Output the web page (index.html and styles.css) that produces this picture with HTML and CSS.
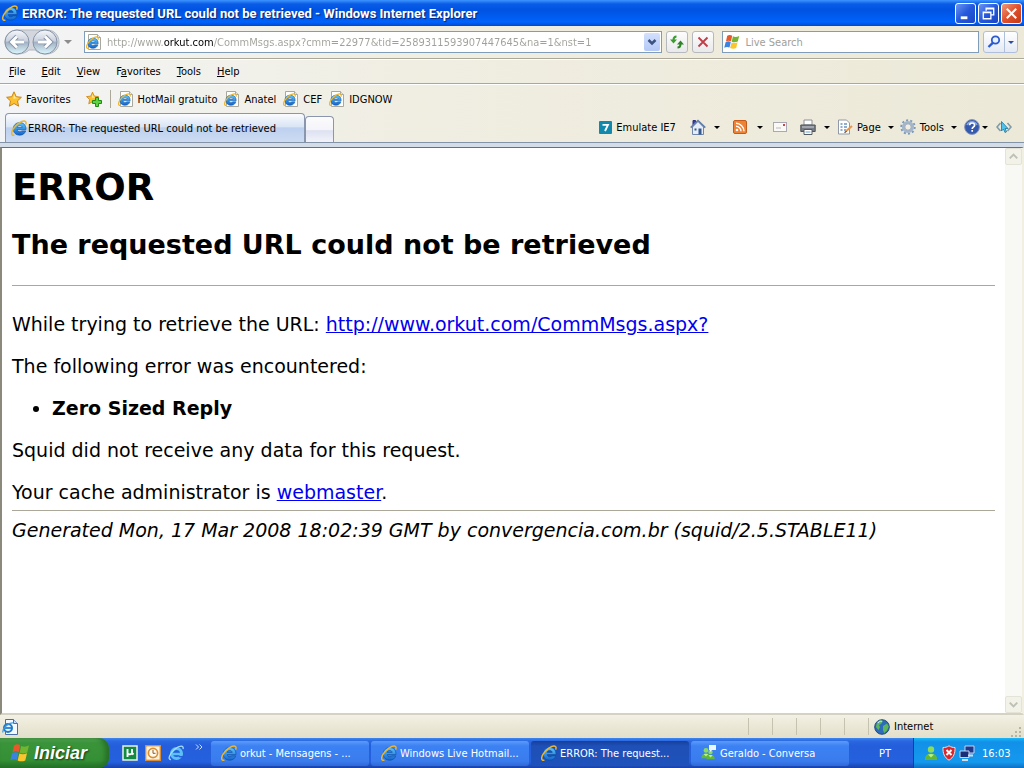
FILE: index.html
```html
<!DOCTYPE html>
<html lang="en">
<head>
<meta charset="utf-8">
<title>ERROR: The requested URL could not be retrieved</title>
<link rel="stylesheet" href="styles.css">
</head>
<body>
<svg class="defs" aria-hidden="true">
  <defs>
    <linearGradient id="ieBlue" x1="0" y1="0" x2="0" y2="1"><stop offset="0" stop-color="#5cc4fa"/><stop offset="1" stop-color="#1264cc"/></linearGradient>
    <linearGradient id="navBall" x1="0" y1="0" x2="0" y2="1"><stop offset="0" stop-color="#f7f8fb"/><stop offset=".45" stop-color="#c9d1de"/><stop offset=".52" stop-color="#a3b2c4"/><stop offset="1" stop-color="#dcf8fd"/></linearGradient>
    <symbol id="ie" viewBox="0 0 16 16">
      <path d="M15 9.600H6.200C6.400 11 7.300 11.800 8.800 11.800c.9 0 1.600-.3 2.100-.9h3.800C13.800 13.600 11.700 15.200 8.700 15.200 4.900 15.200 2.300 12.700 2.300 9 2.300 5.200 5 2.600 8.700 2.600c4 0 6.500 2.700 6.300 7zM6.200 7.400h5C11 6.200 10.100 5.600 8.700 5.600S6.400 6.200 6.200 7.400z" fill="url(#ieBlue)" stroke="#0b4c9c" stroke-width=".6"/>
      <path d="M3.400 15.200C0 16 .1 12.600 2.100 9.200 4.800 4.400 11 .2 14 1.200c1.300.4 1.300 2 .6 3.400" fill="none" stroke="#eeb62c" stroke-width="1.500"/>
    </symbol>
    <symbol id="iepage" viewBox="0 0 16 16">
      <path d="M2.500.5h9l3 3v12h-12z" fill="#fdfdfb" stroke="#a8a89e"/><path d="M11.500.5v3h3" fill="#e6e6e0" stroke="#a8a89e"/>
      <svg x="0" y="2" width="13" height="13"><use href="#ie"/></svg>
    </symbol>
    <symbol id="flag" viewBox="0 0 16 16">
      <path d="M3.200 1.800C5 .8 6.700.9 8.200 1.800L7 7.300C5.400 6.400 3.800 6.400 2 7.300z" fill="#e8582a"/>
      <path d="M8.900 2.300c1.900.9 3.900.8 6.300-.3L13.800 7.500c-2 1-4.100 1.100-6.100.2z" fill="#73b52e"/>
      <path d="M1.700 8c1.800-.9 3.500-.9 5.100 0L5.500 13.600C3.900 12.700 2.300 12.700.2 13.700z" fill="#3b83e0"/>
      <path d="M7.500 8.400c1.900.9 3.900.9 6.100-.2L12.200 13.900c-2 1-4.100 1-6.100 0z" fill="#fbc62d"/>
    </symbol>
    <symbol id="star" viewBox="0 0 16 16"><path d="M8 .8l2.200 4.900 5.200.6-3.900 3.600 1.100 5.300L8 12.500l-4.600 2.700 1.100-5.300L.6 6.300l5.200-.6z" fill="#fdc02f" stroke="#c98516"/><path d="M8 3l1.400 3.600 3.200.5-5.300.6z" fill="#ffed9c"/></symbol>
    <symbol id="buddy" viewBox="0 0 16 16"><circle cx="8" cy="4.500" r="3.200" fill="#8bdc57"/><path d="M2 15c-.5-4 2-6.500 6-6.500s6.500 2.500 6 6.500z" fill="#60b836"/><path d="M5 9.500c2-.8 4-.8 6 0l-3 3z" fill="#b8f08c"/></symbol>
  </defs>
</svg>

<div class="window">
  <header class="titlebar">
    <svg class="i16"><use href="#ie"/></svg>
    <span class="title">ERROR: The requested URL could not be retrieved - Windows Internet Explorer</span>
    <div class="caption">
      <button class="cap" aria-label="Minimize"><svg viewBox="0 0 20 20"><path d="M5 14.500h7" stroke="#fff" stroke-width="3"/></svg></button>
      <button class="cap" aria-label="Restore"><svg viewBox="0 0 20 20"><path d="M7.500 7V4.500h8v7H13M7 5h9M4.500 8.500h8v7h-8zM4 9h9" fill="none" stroke="#fff" stroke-width="1.400"/></svg></button>
      <button class="cap close" aria-label="Close"><svg viewBox="0 0 20 20"><path d="M5 5l10 10M15 5L5 15" stroke="#fff" stroke-width="2.200"/></svg></button>
    </div>
  </header>

  <div class="addressbar">
    <div class="nav">
      <svg class="navplate" viewBox="0 0 56 28"><path d="M13 2h30c7 0 12 5 12 12S50 26 42 26c-6 0-9-2-11-4h-6c-2 2-6 4-12 4C6 26 1 21 1 14S6 2 13 2z" fill="#d3d6dc" stroke="#b4b9c2"/><circle cx="13" cy="14" r="12" fill="url(#navBall)" stroke="#8594a8"/><circle cx="41" cy="14" r="12" fill="url(#navBall)" stroke="#8594a8"/><path d="M20 14H8M13 8.500L7.500 14l5.500 5.500M34 14h12M41 8.500l5.500 5.500-5.500 5.500" fill="none" stroke="#8393a8" stroke-width="4.600"/><path d="M20 14H8M13 8.500L7.500 14l5.500 5.500M34 14h12M41 8.500l5.500 5.500-5.500 5.500" fill="none" stroke="#fff" stroke-width="2.800"/></svg>
      <button class="navbtn" aria-label="Back"></button><button class="navbtn" aria-label="Forward"></button>
    </div>
    <button class="plain history" aria-label="Recent pages"><span class="tri gray"></span></button>
    <div class="field url">
      <svg class="i16"><use href="#iepage"/></svg>
      <input class="urltext" type="text" aria-label="Address" value="http://www.orkut.com/CommMsgs.aspx?cmm=22977&amp;tid=2589311593907447645&amp;na=1&amp;nst=1">
      <button class="drop" aria-label="Show addresses"><svg viewBox="0 0 16 18"><path d="M4.500 7l3.500 3.500L11.500 7" fill="none" stroke="#3b537f" stroke-width="2.500"/></svg></button>
    </div>
    <button class="square refresh" aria-label="Refresh"><svg class="i16" viewBox="0 0 16 16"><path d="M7.500 2.500C5.500 2.500 4.500 3.500 4.500 6" fill="none" stroke="#3b9b2f" stroke-width="2"/><path d="M1 5.500h7L4.500 9.500z" fill="#3b9b2f"/><path d="M8.500 13.500c2 0 3-1 3-3.500" fill="none" stroke="#2f8227" stroke-width="2"/><path d="M8 10.500h7L11.500 6.500z" fill="#2f8227"/></svg></button>
    <button class="square stop" aria-label="Stop"><svg class="i16" viewBox="0 0 16 16"><path d="M3.500 3.500l9 9M12.500 3.500l-9 9" stroke="#c13c48" stroke-width="1.800"/></svg></button>
    <div class="field search">
      <svg class="i16"><use href="#flag"/></svg>
      <input type="text" aria-label="Live Search" placeholder="Live Search">
    </div>
    <div class="searchgroup">
      <button aria-label="Search"><svg class="i16" viewBox="0 0 16 16"><circle cx="9.500" cy="6" r="3.700" fill="#eaf3ff" stroke="#2c5bd0" stroke-width="1.800"/><path d="M6.800 8.800L2.500 13" stroke="#2c5bd0" stroke-width="2.400"/></svg></button><button class="more" aria-label="Search options"><span class="tri blue"></span></button>
    </div>
  </div>

  <nav class="menubar">
    <button><u>F</u>ile</button><button><u>E</u>dit</button><button><u>V</u>iew</button><button>F<u>a</u>vorites</button><button><u>T</u>ools</button><button><u>H</u>elp</button>
  </nav>

  <div class="favbar">
    <button class="item favs"><svg class="i16"><use href="#star"/></svg>Favorites</button>
    <button class="item addfav" aria-label="Add to favorites"><svg class="i16" viewBox="0 0 16 16"><svg width="13" height="14"><use href="#star"/></svg><path d="M9.500 6.500h3v3h3v3h-3v3h-3v-3h-3v-3h3z" fill="#5fd03f" stroke="#1f8a14"/></svg></button>
    <span class="sep"></span>
    <a class="item" href="#"><svg class="i16"><use href="#iepage"/></svg>HotMail gratuito</a>
    <a class="item" href="#"><svg class="i16"><use href="#iepage"/></svg>Anatel</a>
    <a class="item" href="#"><svg class="i16"><use href="#iepage"/></svg>CEF</a>
    <a class="item" href="#"><svg class="i16"><use href="#iepage"/></svg>IDGNOW</a>
  </div>

  <div class="tabrow">
    <button class="tab"><svg class="i16"><use href="#ie"/></svg>ERROR: The requested URL could not be retrieved</button>
    <button class="newtab" aria-label="New tab"></button>
    <div class="commands">
      <button class="item emu"><svg class="i13" viewBox="0 0 13 13"><rect width="13" height="13" rx="1" fill="#1189ad"/><path d="M3.500 3.800h5.500L6 10" fill="none" stroke="#fff" stroke-width="1.800"/></svg>Emulate IE7</button>
      <button class="item home" aria-label="Home"><svg class="i16" viewBox="0 0 16 16"><path d="M2.500 8v7.500h11V8L8 2.500z" fill="#e6edf7" stroke="#7286a8"/><path d="M3 6V1.500h2.500V4" fill="#3b3fa0" stroke="#2a2e80"/><path d="M.7 8.600L8 1.500l7.300 7.100" fill="none" stroke="#5e7bab" stroke-width="1.600"/><path d="M8.500 9.500h3v6h-3z" fill="#35598f"/><path d="M4.500 9.500h2v2h-2z" fill="#35598f"/></svg><span class="tri"></span></button>
      <button class="item feed" aria-label="Feeds"><svg class="i14" viewBox="0 0 14 14"><rect x=".5" y=".5" width="13" height="13" rx="1.500" fill="#ee8335" stroke="#c35b1b"/><circle cx="4" cy="10" r="1.300" fill="#fff"/><path d="M3 6.200a5 5 0 0 1 5 5M3 3.300a8 8 0 0 1 8 8" fill="none" stroke="#fff" stroke-width="1.400"/></svg><span class="tri"></span></button>
      <button class="item mail" aria-label="Read mail"><svg class="i14" viewBox="0 0 14 14"><rect x=".5" y="2.500" width="13" height="9" fill="#faf9f5" stroke="#a9a9b4"/><path d="M3 8h5" stroke="#b8b8c0"/><path d="M10 4h2v2h-2z" fill="#cc4848"/></svg></button>
      <button class="item print" aria-label="Print"><svg class="i16" viewBox="0 0 16 16"><path d="M4 1h8v5H4z" fill="#fff" stroke="#8b9098"/><path d="M.8 6h14.400v6.500H.8z" fill="#777d86" stroke="#4e535b"/><path d="M2 8h12" stroke="#c0c5cc" stroke-width="1.200"/><path d="M4 10.500h8v5H4z" fill="#fff" stroke="#565b63"/><path d="M5.500 13h5" stroke="#62a7d8"/></svg><span class="tri"></span></button>
      <button class="item page"><svg class="i16" viewBox="0 0 16 16"><path d="M1.500 1h8l3 3v11h-11z" fill="#fff" stroke="#8f99a8"/><path d="M3.500 5h2M7 5h3M3.500 8h2M7 8h3M3.500 11h2M7 11h2" stroke="#6c92c0" stroke-width="1.300"/><path d="M8 13l7-6" stroke="#e8974a" stroke-width="2"/><path d="M7.500 13.500l2-1" stroke="#333"/></svg>Page<span class="tri"></span></button>
      <button class="item tools"><svg class="i16" viewBox="0 0 16 16"><circle cx="8" cy="8" r="6.700" fill="none" stroke="#7f9ab8" stroke-width="2" stroke-dasharray="2.100 2.100"/><circle cx="8" cy="8" r="4.700" fill="#f3f2e7" stroke="#a4b6cb" stroke-width="2.800"/><circle cx="8" cy="8" r="3.200" fill="#f1efe2" stroke="#7b90ab" stroke-width=".7"/></svg>Tools<span class="tri"></span></button>
      <button class="item help" aria-label="Help"><svg class="i16" viewBox="0 0 16 16"><circle cx="8" cy="8" r="7.400" fill="#3559ad" stroke="#8796b8"/><path d="M3 6a5.500 5.500 0 0 1 10 0" fill="none" stroke="#86a5e2" stroke-width="1.500"/><path d="M5.500 6.300C5.600 4.700 6.500 4 8 4s2.600.8 2.600 2.200C10.600 7.800 8.200 8 8.200 10M8.200 11v1.700" fill="none" stroke="#fff" stroke-width="1.700"/></svg><span class="tri"></span></button>
      <button class="item dev" aria-label="Developer tools"><svg class="i16" viewBox="0 0 16 16"><path d="M4.500 4L1 8l3.500 4M11.500 4L15 8l-3.500 4" fill="none" stroke="#7f9baa" stroke-width="1.600"/><path d="M5.500 2.500v9.500l2-2 1.500 3.500 1.600-.8L9 9.500h3z" fill="#50c2ec" stroke="#1676a5" stroke-width=".8"/></svg></button>
    </div>
  </div>

  <div class="viewport">
    <main class="content">
      <h1>ERROR</h1>
      <h2>The requested URL could not be retrieved</h2>
      <hr>
      <p class="first">While trying to retrieve the URL: <a href="#">http://www.orkut.com/CommMsgs.aspx?</a></p>
      <p>The following error was encountered:</p>
      <ul><li><strong>Zero Sized Reply</strong></li></ul>
      <p>Squid did not receive any data for this request.</p>
      <p class="last">Your cache administrator is <a href="#">webmaster</a>.</p>
      <hr>
      <address>Generated Mon, 17 Mar 2008 18:02:39 GMT by convergencia.com.br (squid/2.5.STABLE11)</address>
    </main>
    <div class="scroll">
      <button aria-label="Scroll up" disabled><svg viewBox="0 0 16 16"><path d="M4 10l4-4 4 4" fill="none" stroke="#bfc0b5" stroke-width="2"/></svg></button>
      <button aria-label="Scroll down" disabled><svg viewBox="0 0 16 16"><path d="M4 6l4 4 4-4" fill="none" stroke="#bfc0b5" stroke-width="2"/></svg></button>
    </div>
  </div>

  <footer class="status">
    <svg class="i16" viewBox="0 0 16 16"><path d="M3.500.5h8l4 4v11h-12z" fill="#f4f9ff" stroke="#4a6ea8"/><path d="M11.500.5v4h4" fill="#c9dcf4" stroke="#4a6ea8"/><circle cx="6" cy="9" r="4" fill="#e4f3ff" stroke="#1f78c8" stroke-width="2"/><path d="M3 9h7" stroke="#1f78c8" stroke-width="1.700"/><path d="M1 13.500C0 10 6 3.500 11 4" fill="none" stroke="#3a9be0" stroke-width="1.200"/></svg>
    <div class="cells"><span></span><span></span><span></span><span></span><span></span></div>
    <div class="zone"><svg class="i16" viewBox="0 0 16 16"><circle cx="8" cy="8" r="7.300" fill="#2d6cb8" stroke="#224a83"/><path d="M3 3c2-2 5-2.200 6-1L7.500 4.500 5 6l1 2-1.500 3L2 8zM9 7l4-2.500 1.800 3-1.800 4-2.800 2.500L9 11z" fill="#5eb75a"/><path d="M4 4c1.500-2 3-2 4-1.500" stroke="#c7ecff" fill="none"/></svg>Internet</div>
    <svg class="grip" viewBox="0 0 12 12"><path d="M9 1h2v2H9zM5 5h2v2H5zM9 5h2v2H9zM1 9h2v2H1zM5 9h2v2H5zM9 9h2v2H9z" fill="#b8b4a2"/></svg>
  </footer>

  <div class="taskbar">
    <button class="start"><svg class="i20"><use href="#flag"/></svg>Iniciar</button>
    <div class="quick">
      <button aria-label="uTorrent"><svg class="i16" viewBox="0 0 16 16"><rect x="1" y="1" width="14" height="14" fill="#128a42" stroke="#e7f4e7" stroke-width="1.500"/><path d="M5.500 4v8M5.500 8.300c1 1.500 4 1.500 4.500-.3V4M10 8l1.500 1.500" fill="none" stroke="#fff" stroke-width="1.900"/></svg></button>
      <button aria-label="Outlook"><svg class="i16" viewBox="0 0 16 16"><rect x=".7" y=".7" width="14.600" height="14.600" fill="#fff3dc" stroke="#d98d35" stroke-width="1.400"/><circle cx="8" cy="8" r="4.600" fill="#fffaf0" stroke="#d98d35" stroke-width="1.700"/><path d="M8 5v3.300h2.500" fill="none" stroke="#8a5a20"/></svg></button>
      <button aria-label="Internet Explorer"><svg class="i16" viewBox="0 0 16 16"><circle cx="8.500" cy="8.500" r="5" fill="none" stroke="#5cc0f4" stroke-width="3"/><path d="M5 9h9.500" stroke="#5cc0f4" stroke-width="2.400"/><path d="M10.500 11h5v1.500h-4z" fill="#245edb"/><path d="M3 14.500C-1 15 2 8 7 4s9-3.500 8 0" fill="none" stroke="#a5defa" stroke-width="1.300"/></svg></button>
    </div>
    <button class="chev" aria-label="More quick launch"><svg viewBox="0 0 8 6"><path d="M1 .5L3.500 3 1 5.500M4.500 .5L7 3 4.500 5.500" fill="none" stroke="#cfe0ff"/></svg></button>
    <div class="tasks">
      <button class="task"><svg class="i16"><use href="#ie"/></svg><span>orkut - Mensagens - ...</span></button>
      <button class="task"><svg class="i16"><use href="#ie"/></svg><span>Windows Live Hotmail...</span></button>
      <button class="task active"><svg class="i16"><use href="#ie"/></svg><span>ERROR: The request...</span></button>
      <button class="task"><svg class="i16" viewBox="0 0 16 16"><svg x="-1" y="1" width="12" height="14"><use href="#buddy"/></svg><svg x="4" y="3" width="11" height="13"><use href="#buddy"/></svg><path d="M8 0h7v5h-4L9 7V5H8z" fill="#e9f5ff"/></svg><span>Geraldo - Conversa</span></button>
    </div>
    <button class="lang">PT</button>
    <div class="tray">
      <svg class="i16"><use href="#buddy"/></svg>
      <svg class="i16" viewBox="0 0 16 16"><path d="M8 .8c2 1.400 4 1.700 6 1.700.3 6-1.500 10-6 12.700C3.500 12.500 1.700 8.500 2 2.500c2 0 4-.3 6-1.700z" fill="#d9272e" stroke="#eedfe0"/><path d="M5.500 5l5 5M10.500 5l-5 5" stroke="#fff" stroke-width="1.900"/></svg>
      <svg class="i16" viewBox="0 0 16 16"><path d="M6 1h9v7H6z" fill="#20388c" stroke="#c8d2ee"/><path d="M1 6h9v6.500H1z" fill="#182e78" stroke="#c8d2ee"/><path d="M3 15h6M9 10.500h5" stroke="#d7dbe8" stroke-width="2"/></svg>
      <time>16:03</time>
    </div>
  </div>
</div>
</body>
</html>
```
FILE: styles.css
```css
* { box-sizing: border-box; }
body { margin: 0; font-family: "DejaVu Sans Condensed", "DejaVu Sans", sans-serif; font-size: 11px; color: #000; }
button, input { font: inherit; color: inherit; border: 0; padding: 0; margin: 0; background: none; }
svg { display: block; flex: none; }
.defs { position: absolute; width: 0; height: 0; }
.i16 { width: 16px; height: 16px; }
.i14 { width: 14px; height: 14px; }
.i13 { width: 13px; height: 13px; }
.i20 { width: 20px; height: 20px; }
.window { display: flex; flex-direction: column; min-height: 100vh; background: linear-gradient(90deg, #f3f4f6, #f0eee2 40%, #ece9d8); }

.titlebar { display: flex; align-items: center; height: 26px; padding: 0 2px 0 2px; gap: 4px; background: linear-gradient(#3d95ff 0, #0a5ce6 4px, #0053e1 10px, #0063fc 22px, #0048cf 26px); color: #fff; }
.title { flex: 1; font: bold 13px Roboto, sans-serif; text-shadow: 1px 1px 1px #0a1f6b; white-space: nowrap; }
.caption { display: flex; gap: 2px; }
.cap { width: 21px; height: 21px; border: 1px solid #fff; border-radius: 3px; background: linear-gradient(135deg, #6b95f2, #2458dc 50%, #1c46c4); }
.close { background: linear-gradient(135deg, #f09a7a, #e0502c 50%, #c23a14); }

.addressbar { display: flex; align-items: center; height: 33px; padding: 0 6px 0 4px; border-bottom: 1px solid #aca899; }
.nav { display: flex; position: relative; width: 56px; height: 28px; }
.navplate { position: absolute; inset: 0; width: 56px; height: 28px; }
.navbtn { flex: 1; position: relative; border-radius: 14px; }
.plain { display: grid; place-items: center; width: 24px; height: 20px; padding-right: 8px; }
.tri { display: inline-block; border: 3px solid transparent; border-top-color: #000; border-bottom: 0; }
.tri.gray { border-width: 4px 4px 0; border-top-color: #8c8c8c; }
.tri.blue { border-top-color: #2c4d9c; }
.field { display: flex; align-items: center; height: 22px; border: 1px solid #7f9db9; background: #fff; padding: 0 1px; }
.field input { flex: 1; min-width: 0; outline: 0; }
.url { flex: 580; gap: 5px; }
.url .urltext { color: transparent; background: linear-gradient(90deg, #a0a09a 57px, #000 57px, #000 106px, #a0a09a 106px); background-clip: text; -webkit-background-clip: text; }
.drop { width: 16px; height: 18px; border-radius: 2px; background: linear-gradient(#d3e0fd, #b4c9f6); }
.square { display: grid; place-items: center; width: 22px; height: 22px; margin-left: 4px; border: 1px solid #b5b8bc; border-radius: 3px; background: linear-gradient(#fdfdfd, #e9e8ea); }
.search { flex: 255; gap: 5px; margin: 0 4px 0 8px; }
.search input::placeholder { color: #a0a09a; opacity: 1; }
.searchgroup { display: flex; height: 22px; border: 1px solid #aebfdc; border-radius: 3px; background: linear-gradient(#fff, #e4e9f4); }
.searchgroup button { display: grid; place-items: center; width: 20px; }
.searchgroup .more { width: 13px; border-left: 1px solid #aebfdc; }

.menubar { display: flex; gap: 16px; height: 25px; padding: 0 9px; border-top: 1px solid #fff; border-bottom: 1px solid #aca899; }
.favbar { display: flex; align-items: center; height: 29px; padding: 0 6px; border-top: 1px solid #fff; white-space: nowrap; }
.item { display: flex; align-items: center; gap: 4px; color: #000; text-decoration: none; white-space: nowrap; }
.favbar a { margin-right: 7px; }
.addfav { margin-left: 15px; }
.sep { width: 1px; height: 18px; margin: 0 7px 0 8px; background: #aca899; }

.tabrow { display: flex; align-items: flex-end; height: 30px; padding-left: 5px; border-bottom: 1px solid #8494a8; }
.tab { display: flex; align-items: center; gap: 1px; width: 300px; height: 29px; padding: 0 5px; border: 1px solid #8a96ae; border-bottom: 0; border-radius: 4px 4px 0 0; background: linear-gradient(#fbfcfe, #d9e4f5 45%, #bdd0ef 50%, #cddcf2); white-space: nowrap; }
.newtab { width: 29px; height: 26px; border: 1px solid #8a96ae; border-bottom: 0; border-radius: 4px 4px 0 0; background: linear-gradient(#fcfcfd, #f4f4fa 50%, #dde2f1 55%, #f2f3fa); }
.commands { display: flex; align-items: center; justify-content: flex-end; flex: 1; height: 30px; padding-right: 12px; }
.commands .home { margin-left: 14px; gap: 8px; }
.commands .feed { margin-left: 13px; gap: 10px; }
.commands .mail { margin-left: 10px; }
.commands .print { margin-left: 13px; gap: 8px; }
.commands .page { margin-left: 7px; }
.commands .tools { margin-left: 6px; }
.commands .page .tri, .commands .tools .tri { margin-left: 3px; }
.commands .help { margin-left: 7px; gap: 2px; }
.commands .dev { margin-left: 8px; }

.viewport { display: flex; flex: 1; border: 2px solid #716f64; border-top-width: 1px; border-right-color: #f1efe2; border-bottom-color: #d5d2c2; border-left-color: #8b897c; margin-top: 4px; background: #fff; box-shadow: 0 -4px 0 #d4dce8; }
.content { flex: 1; padding: 17px 10px 0; font-family: "DejaVu Sans", Verdana, sans-serif; font-size: 19px; line-height: 24px; }
h1 { margin: 0; font-size: 37px; line-height: 46px; }
h2 { margin: 18px 0 24px; font-size: 27px; line-height: 32px; }
hr { height: 1px; margin: 0; border: 0; background: #aca899; }
p { margin: 0 0 18px; }
.first { margin-top: 26px; }
.last { margin-bottom: 6px; }
ul { margin: 0 0 18px; padding-left: 40px; }
address { margin-top: 7px; }
a { color: #0000f0; }
.scroll { display: flex; flex-direction: column; justify-content: space-between; width: 17px; background: #f8f8f4; }
.scroll button { height: 17px; border: 1px solid #e4e3d8; border-radius: 2px; background: #f3f2e9; }

.status { display: flex; align-items: center; height: 23px; padding: 0 2px; background: linear-gradient(#f3f1e6, #ece9d8 40%, #e2dfcc); }
.cells { display: flex; flex: 1; justify-content: flex-end; }
.cells span { width: 24px; height: 17px; border-left: 1px solid #c5c2b0; }
.zone { display: flex; align-items: center; gap: 4px; width: 142px; height: 17px; padding-left: 5px; border-left: 1px solid #c5c2b0; }
.grip { width: 12px; height: 12px; align-self: flex-end; }

.taskbar { display: flex; align-items: stretch; height: 30px; color: #fff; background: linear-gradient(#3d87f0 0, #2a67e0 3px, #245edb 8px, #2560de 24px, #1941a5 30px); }
.start { display: flex; align-items: center; gap: 4px; width: 109px; padding-left: 10px; border-radius: 0 10px 10px 0; background: linear-gradient(#57ad57 0, #3a943a 5px, #359035 22px, #23702a 30px); box-shadow: inset -4px 0 5px #276f27; font: italic bold 18px "Liberation Sans", sans-serif; text-shadow: 1px 1px 2px #12380f; }
.quick { display: flex; align-items: center; gap: 7px; margin-left: 13px; }
.chev { width: 8px; margin: 6px 8px 0 11px; align-self: flex-start; }
.tasks { display: flex; flex: 1; gap: 2px; align-items: center; }
.task { display: flex; align-items: center; gap: 3px; flex: 0 1 158px; min-width: 0; height: 25px; padding-left: 10px; border-radius: 3px; background: linear-gradient(#5c9bfb, #3c81f3 5px, #3a7cee 20px, #3068d8); white-space: nowrap; }
.task span { overflow: hidden; }
.active { background: linear-gradient(#173f9c, #1e50b7 5px, #1f52ba); }
.lang { width: 56px; }
.tray { display: flex; align-items: center; gap: 2px; width: 111px; padding-left: 9px; border-left: 1px solid #10428f; background: linear-gradient(#19b9f8 0, #1290e8 4px, #1499ee 24px, #0f6fc4 30px); }
.tray time { margin-left: 5px; }
```
